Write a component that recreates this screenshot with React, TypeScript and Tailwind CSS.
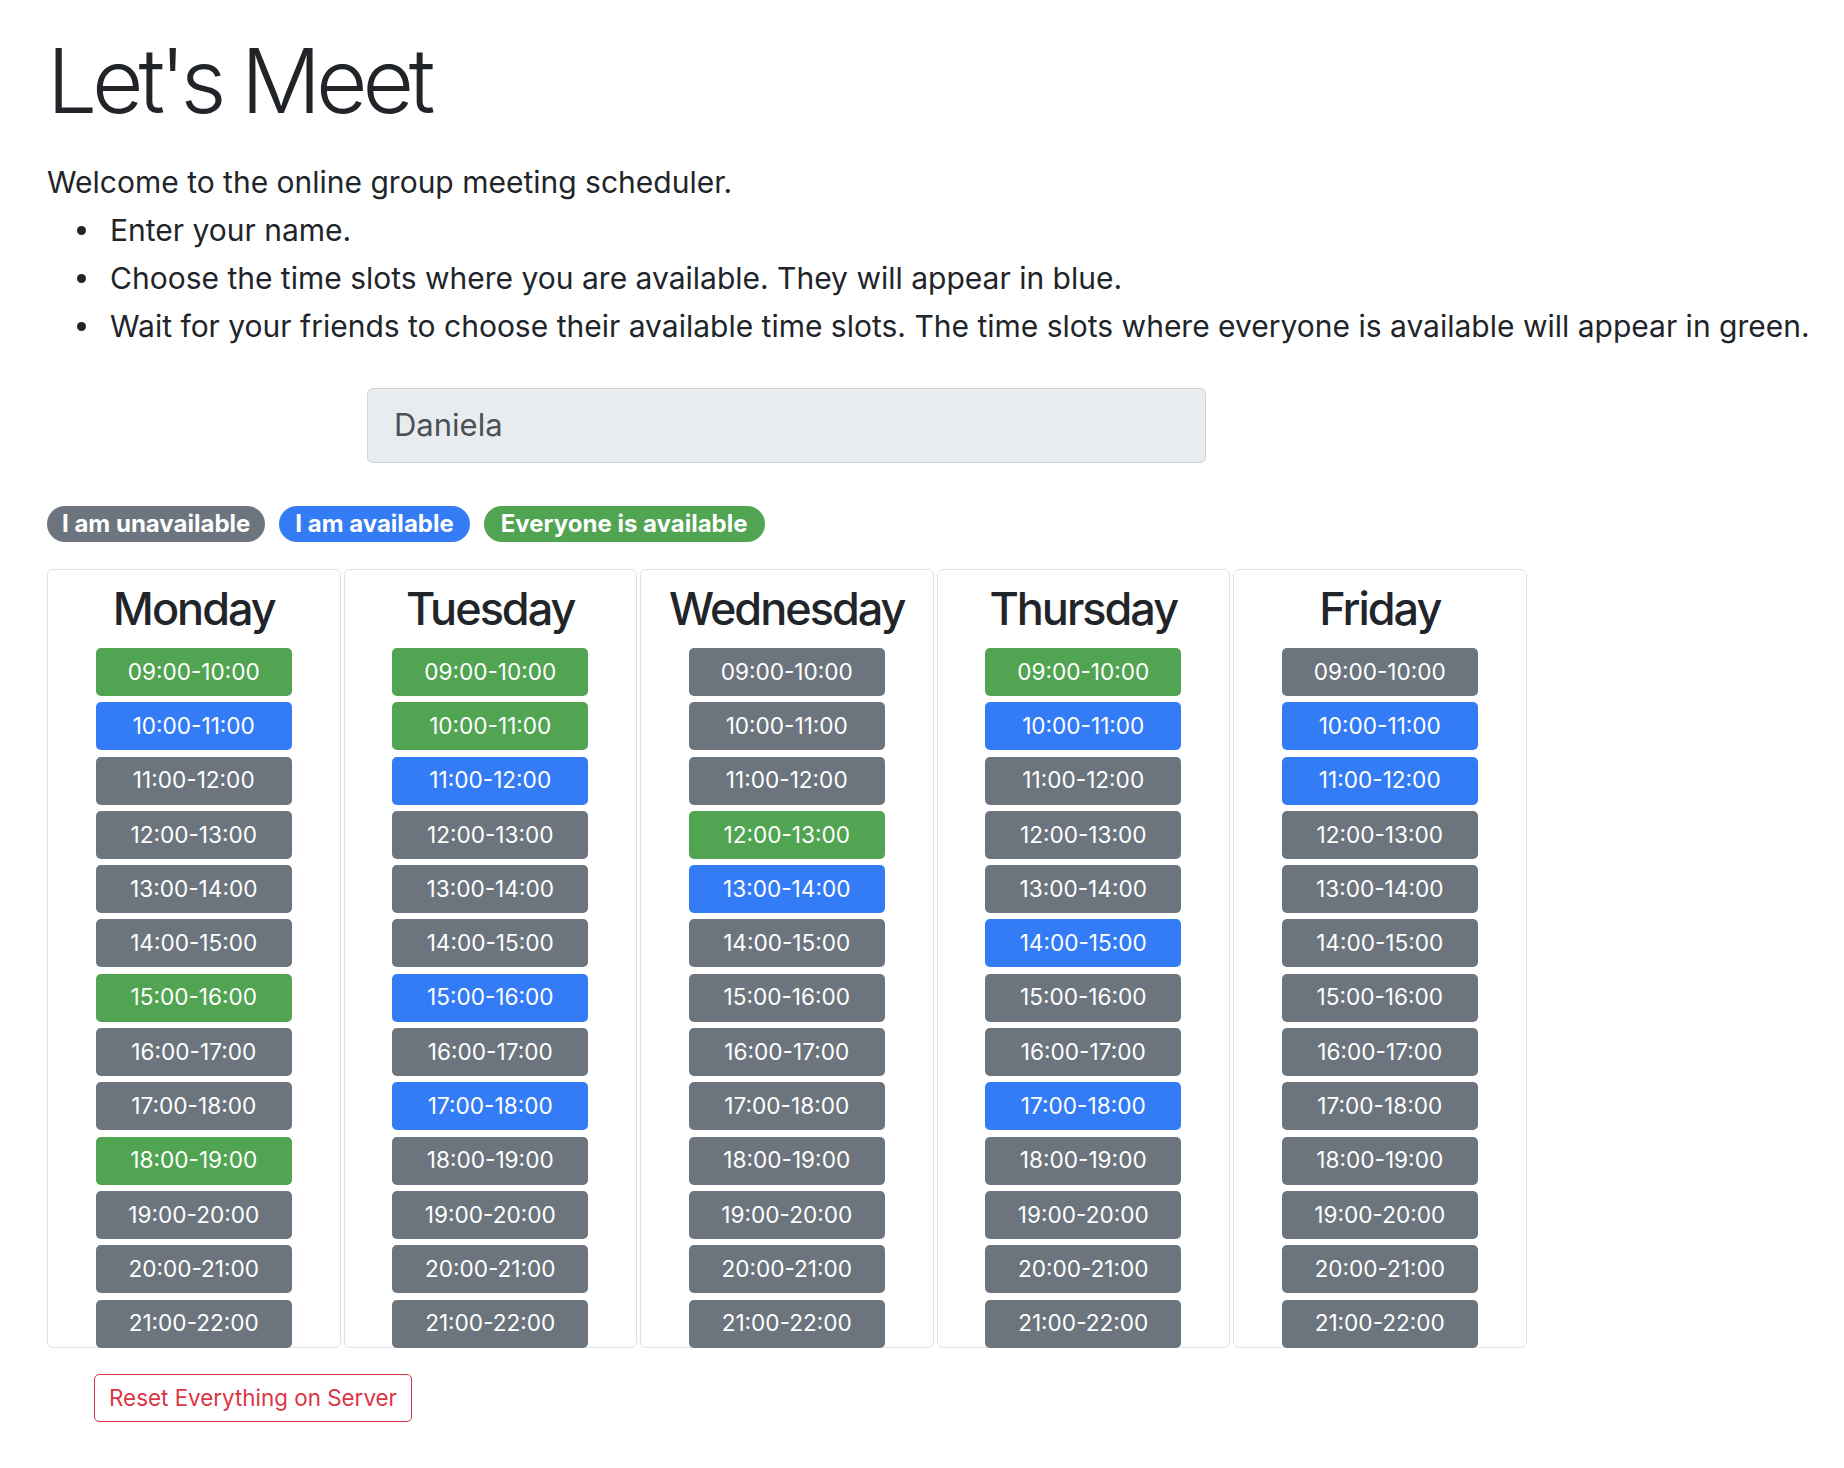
import React from "react";

type S = "g" | "b" | "x";

const SLOTS = [
  "09:00-10:00",
  "10:00-11:00",
  "11:00-12:00",
  "12:00-13:00",
  "13:00-14:00",
  "14:00-15:00",
  "15:00-16:00",
  "16:00-17:00",
  "17:00-18:00",
  "18:00-19:00",
  "19:00-20:00",
  "20:00-21:00",
  "21:00-22:00",
];

const DAYS: { name: string; s: S[] }[] = [
  { name: "Monday", s: ["g", "b", "x", "x", "x", "x", "g", "x", "x", "g", "x", "x", "x"] },
  { name: "Tuesday", s: ["g", "g", "b", "x", "x", "x", "b", "x", "b", "x", "x", "x", "x"] },
  { name: "Wednesday", s: ["x", "x", "x", "g", "b", "x", "x", "x", "x", "x", "x", "x", "x"] },
  { name: "Thursday", s: ["g", "b", "x", "x", "x", "b", "x", "x", "b", "x", "x", "x", "x"] },
  { name: "Friday", s: ["x", "b", "b", "x", "x", "x", "x", "x", "x", "x", "x", "x", "x"] },
];

function Slot({ label, s }: { label: string; s: S }) {
  const bg = s === "g" ? "bg-[#51a451]" : s === "b" ? "bg-[#347cf6]" : "bg-[#6c757d]";
  return (
    <div
      className={`${bg} w-[196px] h-[48px] shrink-0 rounded-[5px] flex items-center justify-center text-white text-[22.6px] leading-none`}
    >
      {label}
    </div>
  );
}

export default function App() {
  return (
    <div
      className="min-h-screen bg-white text-[#212529] pl-[47px]"
      style={{ fontFamily: "Inter, 'Noto Sans', sans-serif" }}
    >
      <h1 className="pt-[27px] text-[89px] leading-[107px] font-light tracking-[-5.2px]">Let's Meet</h1>
      <div className="mt-[24px] text-[30px] leading-[48px]">
        <p>Welcome to the online group meeting scheduler.</p>
        <ul className="pl-[63px]">
          <li className="relative">
            <span className="absolute left-[-33px] top-[20px] w-[9px] h-[9px] rounded-full bg-[#212529]" />
            Enter your name.
          </li>
          <li className="relative">
            <span className="absolute left-[-33px] top-[20px] w-[9px] h-[9px] rounded-full bg-[#212529]" />
            Choose the time slots where you are available. They will appear in blue.
          </li>
          <li className="relative">
            <span className="absolute left-[-33px] top-[20px] w-[9px] h-[9px] rounded-full bg-[#212529]" />
            Wait for your friends to choose their available time slots. The time slots where everyone is available will appear in green.
          </li>
        </ul>
      </div>

      <div className="mt-[38px] ml-[320px] w-[839px] h-[75px] rounded-[6px] border-[1.5px] border-[#ced4da] bg-[#e9ecef] flex items-center px-[26px] text-[31px] text-[#495057]">
        Daniela
      </div>

      <div className="mt-[43px] flex gap-[14px]">
        <span className="h-[36px] px-[15px] rounded-full bg-[#6c757d] text-white font-bold text-[24px] flex items-center">
          I am unavailable
        </span>
        <span className="h-[36px] px-[16px] rounded-full bg-[#347cf6] text-white font-bold text-[24px] flex items-center">
          I am available
        </span>
        <span className="h-[36px] px-[17px] rounded-full bg-[#51a451] text-white font-bold text-[24px] flex items-center">
          Everyone is available
        </span>
      </div>

      <div className="mt-[27px] flex gap-[3px]">
        {DAYS.map((d) => (
          <div
            key={d.name}
            className="w-[293.5px] h-[779px] border-[1.5px] border-[#dfe2e6] rounded-[6px] flex flex-col items-center pt-[12px]"
          >
            <h2 className="text-[45px] leading-[54px] font-medium tracking-[-2px]">{d.name}</h2>
            <div className="mt-[12px] flex flex-col gap-[6.3px]">
              {d.s.map((s, i) => (
                <Slot key={i} label={SLOTS[i]} s={s} />
              ))}
            </div>
          </div>
        ))}
      </div>

      <div className="mt-[26px] ml-[47px] pb-[40px]">
        <button className="h-[48px] px-[14px] rounded-[5px] border-[1.5px] border-[#dc3545] text-[#dc3545] text-[22.4px] bg-white">
          Reset Everything on Server
        </button>
      </div>
    </div>
  );
}
